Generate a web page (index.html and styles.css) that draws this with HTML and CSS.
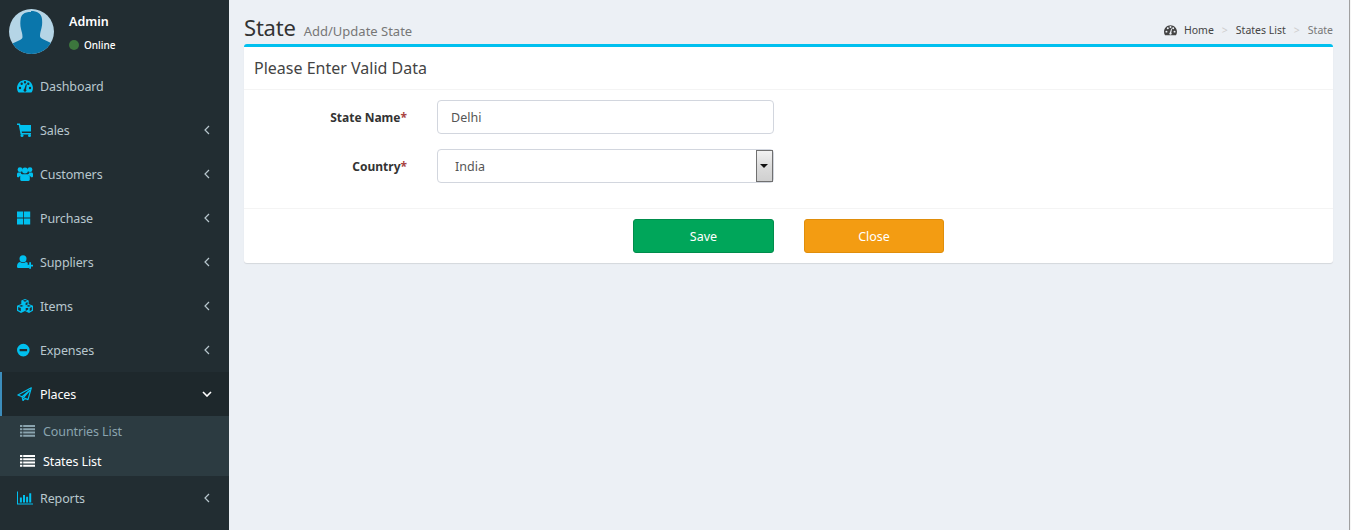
FILE: index.html
```html
<!DOCTYPE html>
<html lang="en">
<head>
<meta charset="utf-8">
<title>State</title>
<link rel="stylesheet" href="styles.css">
</head>
<body>
<div class="app">
  <aside class="sidebar">
    <div class="user-panel">
      <svg class="avatar" viewBox="0 0 45 45">
        <rect width="45" height="45" fill="#b5d5e6"/>
        <path fill="#0a76ab" d="M22 2c6 0 10.500 2.500 11 8 .3 3 .3 6-.5 9-.6 3-1.500 4.500-1.500 8 0 1.500 1 2.300 3 3.200l6.500 3c1.500.7 3 1.500 4 2.500V46H0v-9.300c1-1 2.500-1.800 4-2.500l6.500-3c2-.9 3-1.700 3-3.200 0-3.500-.9-5-1.500-8-.8-3-.8-6-.5-9 .5-5.500 3.500-8 10.500-8z"/>
      </svg>
      <div class="user-info">
        <div class="user-name">Admin</div>
        <div class="user-status"><span class="dot"></span>Online</div>
      </div>
    </div>
    <nav class="menu">
      <a class="item"><svg class="ico" viewBox="0 0 16 14"><path d="M8 1C3.600 1 0 4.600 0 9c0 1.500.4 2.800 1.100 4 .2.300.4.400.7.400h12.400c.3 0 .5-.1.700-.4.700-1.200 1.100-2.500 1.100-4 0-4.400-3.600-8-8-8zM3 10.200a1.200 1.200 0 1 1 0-2.400 1.200 1.200 0 0 1 0 2.400zM4.700 6a1.200 1.200 0 1 1 0-2.400 1.200 1.200 0 0 1 0 2.400zM8 4.400a1.200 1.200 0 1 1 0-2.400 1.200 1.200 0 0 1 0 2.400zm1.400 7.400a1.500 1.500 0 0 1-2.800 0c-.2-.7.100-1.400.7-1.700L8.800 5.500c.1-.3.400-.4.600-.3.300.1.400.3.400.6L9 10.500c.5.300.6.800.4 1.300zm1.900-5.800a1.200 1.200 0 1 1 0-2.400 1.200 1.200 0 0 1 0 2.400zm1.700 4.200a1.200 1.200 0 1 1 0-2.400 1.200 1.200 0 0 1 0 2.400z"/></svg><span class="label">Dashboard</span></a>
      <a class="item"><svg class="ico" viewBox="0 0 16 14"><path d="M0 .5h3l.4 1.500H14v6.500H4.700l.3 1.500h9v1.500H3.600L1.800 2H0z"/><circle cx="5" cy="12.500" r="1.500"/><circle cx="12.500" cy="12.500" r="1.500"/></svg><span class="label">Sales</span><svg class="chev" viewBox="0 0 6 10"><path d="M5 1 1 5l4 4"/></svg></a>
      <a class="item"><svg class="ico" viewBox="0 0 16 14"><circle cx="3" cy="2.700" r="2.400"/><circle cx="13" cy="2.700" r="2.400"/><circle cx="8" cy="3.400" r="3"/><path d="M0 7c0-1 .7-1.600 1.500-1.600h2.700c-.3.900 0 1.900.8 2.700-1.600.3-2.700 1.300-3 2.200H.8C.3 10.300 0 9.900 0 9.500zM16 7c0-1-.7-1.600-1.500-1.600h-2.700c.3.900 0 1.900-.8 2.700 1.600.3 2.700 1.300 3 2.200h1.200c.5 0 .8-.4.800-.8zM5.500 7.300h5c1.400 0 2.300 1 2.300 2.500v2.800c0 .8-.5 1.400-1.300 1.400h-7c-.8 0-1.300-.6-1.300-1.400V9.800c0-1.500.9-2.500 2.300-2.500z"/></svg><span class="label">Customers</span><svg class="chev" viewBox="0 0 6 10"><path d="M5 1 1 5l4 4"/></svg></a>
      <a class="item"><svg class="ico" viewBox="0 0 16 14"><path d="M0 .5h6.200v6H0zM7 .5h6.200v6H7zM0 7.400h6.200v6H0zM7 7.400h6.200v6H7z"/></svg><span class="label">Purchase</span><svg class="chev" viewBox="0 0 6 10"><path d="M5 1 1 5l4 4"/></svg></a>
      <a class="item"><svg class="ico" viewBox="0 0 16 14"><circle cx="6" cy="3.700" r="3.500"/><path d="M3 6.900c1.800 1.400 4.200 1.400 6 0 .9.200 1.600.6 2 1.100h-.3v2.500h1.400V13H1.300C.5 13 0 12.400 0 11.500 0 9 1 7 3 6.900zM12.200 7.200H14v2.500h2v1.700h-2v2.300h-1.800v-2.300h-2.400V9.700h2.400z"/></svg><span class="label">Suppliers</span><svg class="chev" viewBox="0 0 6 10"><path d="M5 1 1 5l4 4"/></svg></a>
      <a class="item"><svg class="ico" viewBox="0 0 16 14"><path fill-rule="evenodd" d="M8 0l3.700 1.400v3.700L16 6.700v5L12 14l-4-2-4 2-4-2.300v-5l4.300-1.600V1.400zM8 1 5.800 1.800 8 2.700l2.200-.9zM4.300 6 2 6.900l2.300.9 2.300-.9zM11.700 6 9.400 6.900l2.300.9 2.300-.9zM8.600 3.900v2.300l2-.8V3.100zM1.200 8v2.900l2.600 1.400V9zM8.700 9v3l2.500-1.400L11.200 9zM12.700 9v3.300l2.100-1.400V8z"/></svg><span class="label">Items</span><svg class="chev" viewBox="0 0 6 10"><path d="M5 1 1 5l4 4"/></svg></a>
      <a class="item"><svg class="ico" viewBox="0 0 16 14"><path fill-rule="evenodd" d="M6.300.8a6.300 6.300 0 1 1 0 12.600 6.300 6.300 0 0 1 0-12.600zM2.600 6v2.300h7.500V6z"/></svg><span class="label">Expenses</span><svg class="chev" viewBox="0 0 6 10"><path d="M5 1 1 5l4 4"/></svg></a>
      <a class="item active"><svg class="ico plane" viewBox="0 0 16 14"><path d="M14.300.8.900 8l4.200 1.800 7.400-6.300-6 7.200 4.500 1.900zM5.100 9.800l.9 3.700 2.100-2.400"/></svg><span class="label">Places</span><svg class="chev down" viewBox="0 0 10 6"><path d="M1 1l4 4 4-4"/></svg></a>
      <div class="submenu">
        <a class="subitem"><svg class="list-ico" viewBox="0 0 15 12"><path d="M0 0h2.400v2.100H0zM3.200 0H15v2.100H3.200zM0 3.200h2.400v2.100H0zM3.200 3.200H15v2.100H3.200zM0 6.500h2.400v2.100H0zM3.200 6.500H15v2.100H3.200zM0 9.700h2.400v2.100H0zM3.200 9.700H15v2.100H3.200z"/></svg>Countries List</a>
        <a class="subitem current"><svg class="list-ico" viewBox="0 0 15 12"><path d="M0 0h2.400v2.100H0zM3.200 0H15v2.100H3.200zM0 3.200h2.400v2.100H0zM3.200 3.200H15v2.100H3.200zM0 6.500h2.400v2.100H0zM3.200 6.500H15v2.100H3.200zM0 9.700h2.400v2.100H0zM3.200 9.700H15v2.100H3.200z"/></svg>States List</a>
      </div>
      <a class="item"><svg class="ico" viewBox="0 0 16 14"><path d="M0 .6h1v11.900h15v1H0zM2.900 6.500h2v5h-2zM6 3.900h2v7.600H6zM9.100 5.800h2v5.700h-2zM12.200 2.300h2v9.200h-2z"/></svg><span class="label">Reports</span><svg class="chev" viewBox="0 0 6 10"><path d="M5 1 1 5l4 4"/></svg></a>
    </nav>
  </aside>
  <main class="content">
    <header class="page-head">
      <h1 class="title">State<small class="subtitle">Add/Update State</small></h1>
      <ol class="crumbs">
        <li class="crumb"><svg class="crumb-ico" viewBox="0 0 16 14"><path d="M8 1C3.600 1 0 4.600 0 9c0 1.500.4 2.800 1.100 4 .2.300.4.400.7.400h12.400c.3 0 .5-.1.700-.4.700-1.200 1.100-2.500 1.100-4 0-4.400-3.600-8-8-8zM3 10.200a1.200 1.200 0 1 1 0-2.400 1.200 1.200 0 0 1 0 2.400zM4.700 6a1.200 1.200 0 1 1 0-2.400 1.200 1.200 0 0 1 0 2.400zM8 4.400a1.200 1.200 0 1 1 0-2.400 1.200 1.200 0 0 1 0 2.400zm1.400 7.400a1.500 1.500 0 0 1-2.800 0c-.2-.7.100-1.400.7-1.700L8.800 5.500c.1-.3.400-.4.600-.3.300.1.400.3.400.6L9 10.500c.5.300.6.800.4 1.300zm1.900-5.800a1.200 1.200 0 1 1 0-2.400 1.200 1.200 0 0 1 0 2.400zm1.700 4.200a1.200 1.200 0 1 1 0-2.400 1.200 1.200 0 0 1 0 2.400z"/></svg>Home</li>
        <li class="sep">&gt;</li>
        <li class="crumb">States List</li>
        <li class="sep">&gt;</li>
        <li class="crumb last">State</li>
      </ol>
    </header>
    <section class="box">
      <div class="box-head">Please Enter Valid Data</div>
      <form class="box-body">
        <div class="row">
          <label class="field-label" for="state">State Name<span class="req">*</span></label>
          <input class="control" id="state" type="text" value="Delhi">
        </div>
        <div class="row">
          <label class="field-label" for="country">Country<span class="req">*</span></label>
          <div class="select-wrap">
            <select class="control select" id="country"><option>India</option></select>
            <span class="arrow"></span>
          </div>
        </div>
      </form>
      <div class="box-foot">
        <button class="btn save" type="button">Save</button>
        <button class="btn close" type="button">Close</button>
      </div>
    </section>
  </main>
</div>
</body>
</html>
```

FILE: styles.css
```css
* { box-sizing: border-box; }
html, body { margin: 0; height: 100%; overflow: hidden; }
body { font-family: "Noto Sans", "Open Sans", sans-serif; font-size: 13px; color: #333; background: #ecf0f5; }
.app { display: flex; height: 530px; border-right: 1px solid #f5f5f5; }

.sidebar { width: 229px; flex: none; background: #222d32; }
.user-panel { height: 64px; display: flex; padding: 9px 0 0 9px; gap: 15px; }
.avatar { width: 45px; height: 45px; flex: none; border-radius: 50%; }
.user-info { padding-top: 4px; }
.user-name { font-weight: 600; font-size: 12.500px; line-height: 18px; color: #fff; }
.user-status { margin-top: 7px; font-size: 10px; font-weight: 500; line-height: 14px; color: #fff; display: flex; align-items: center; }
.dot { width: 10px; height: 10px; border-radius: 50%; background: #3c763d; margin-right: 5px; }

.item { height: 44px; display: flex; align-items: center; padding-left: 17px; padding-right: 19px; color: #b8c7ce; font-size: 12.500px; letter-spacing: -.12px; }
.item.active { background: #1e282c; color: #fff; border-left: 2px solid #3c8dbc; padding-left: 15px; }
.ico { width: 16px; height: 14px; fill: #00c0ef; flex: none; margin-right: 7px; overflow: visible; }
.plane { fill: none; stroke: #00c0ef; stroke-width: 1.200; stroke-linejoin: round; }
.label { flex: 1; }
.chev { width: 6px; height: 10px; fill: none; stroke: #b8c7ce; stroke-width: 1.200; }
.chev.down { width: 10px; height: 6px; stroke: #fff; stroke-width: 1.600; margin-right: -2px; }
.submenu { background: #2c3b41; height: 60px; }
.subitem { height: 30px; display: flex; align-items: center; padding-left: 20px; color: #8aa4af; font-size: 12.500px; letter-spacing: -.1px; }
.subitem.current { color: #fff; }
.list-ico { width: 15px; height: 12px; fill: currentColor; margin-right: 8px; }

.content { flex: 1; padding: 0 16px 0 15px; min-width: 0; border-right: 1px solid #a0a0a0; }
.page-head { height: 44px; display: flex; justify-content: space-between; align-items: flex-end; }
.title { margin: 0; font-size: 22px; font-weight: 400; line-height: 30px; color: #333; letter-spacing: -.2px; position: relative; top: 2px; }
.subtitle { font-size: 13px; color: #777; margin-left: 8px; font-weight: 400; letter-spacing: 0; }
.crumbs { display: flex; list-style: none; margin: 0; padding: 0 0 7px; font-size: 10.500px; line-height: 14px; color: #444; }
.crumb-ico { width: 13px; height: 12px; fill: #444; margin-right: 7px; vertical-align: -2px; }
.sep { color: #ccc; margin: 0 8px; }
.last { color: #777; }

.box { background: #fff; border-top: 3px solid #00c0ef; border-radius: 3px; box-shadow: 0 1px 1px rgba(0,0,0,.1); }
.box-head { height: 43px; padding: 10px 10px 0; font-size: 16px; line-height: 22px; color: #444; border-bottom: 1px solid #f4f4f4; }
.box-body { padding: 10px 0 0; height: 119px; border-bottom: 1px solid #f4f4f4; }
.row { display: flex; align-items: center; height: 34px; margin-bottom: 15px; }
.field-label { width: 163px; text-align: right; font-weight: 700; font-size: 12px; color: #333; margin-right: 30px; }
.req { color: #a94442; }
.control { width: 337px; height: 34px; border: 1px solid #d2d6de; border-radius: 4px; background: #fff; font: inherit; font-size: 12.500px; color: #555; padding: 0 13px; outline: none; }
.select-wrap { position: relative; width: 337px; height: 34px; }
.select { appearance: none; -webkit-appearance: none; padding-left: 17px; }
.arrow { position: absolute; right: 1px; top: 1px; width: 17px; height: 32px; border: 1px solid #707070; background: linear-gradient(#f2f2f2, #dcdcdc 50%, #d0d0d0); }
.arrow::after { content: ""; position: absolute; left: 3px; top: 13px; border: 4px solid transparent; border-top: 4px solid #111; border-bottom: 0; }

.box-foot { padding: 10px 0 10px 389px; display: flex; gap: 30px; height: 54px; }
.btn { height: 34px; border-radius: 3px; color: #fff; font: inherit; font-size: 12.500px; border: 1px solid; padding: 0; }
.save { width: 141px; background: #00a65a; border-color: #008d4c; }
.close { width: 140px; background: #f39c12; border-color: #e08e0b; }
```
